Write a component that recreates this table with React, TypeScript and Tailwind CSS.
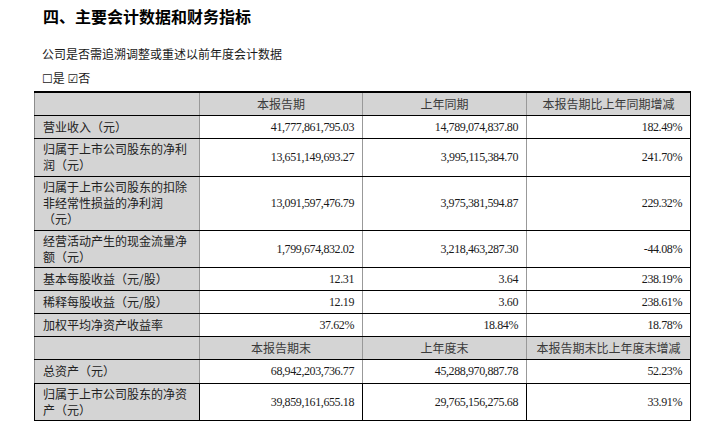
type Row = {
  label: string[];
  values: string[];
  h: string;
  header?: boolean;
  last?: boolean;
};

const rows: Row[] = [
  { label: [], values: ['本报告期', '上年同期', '本报告期比上年同期增减'], h: 'h-[23px]', header: true },
  { label: ['营业收入（元）'], values: ['41,777,861,795.03', '14,789,074,837.80', '182.49%'], h: 'h-[23px]' },
  { label: ['归属于上市公司股东的净利', '润（元）'], values: ['13,651,149,693.27', '3,995,115,384.70', '241.70%'], h: 'h-[38px]' },
  {
    label: ['归属于上市公司股东的扣除', '非经常性损益的净利润', '（元）'],
    values: ['13,091,597,476.79', '3,975,381,594.87', '229.32%'],
    h: 'h-[54px]',
  },
  { label: ['经营活动产生的现金流量净', '额（元）'], values: ['1,799,674,832.02', '3,218,463,287.30', '-44.08%'], h: 'h-[37px]' },
  { label: ['基本每股收益（元/股）'], values: ['12.31', '3.64', '238.19%'], h: 'h-[23px]' },
  { label: ['稀释每股收益（元/股）'], values: ['12.19', '3.60', '238.61%'], h: 'h-[23px]' },
  { label: ['加权平均净资产收益率'], values: ['37.62%', '18.84%', '18.78%'], h: 'h-[23px]' },
  { label: [], values: ['本报告期末', '上年度末', '本报告期末比上年度末增减'], h: 'h-[23px]', header: true },
  { label: ['总资产（元）'], values: ['68,942,203,736.77', '45,288,970,887.78', '52.23%'], h: 'h-[24px]' },
  {
    label: ['归属于上市公司股东的净资', '产（元）'],
    values: ['39,859,161,655.18', '29,765,156,275.68', '33.91%'],
    h: 'h-[37px]',
    last: true,
  },
];

export default function App() {
  return (
    <div className="w-[707px] h-[436px] bg-white overflow-hidden pt-[6px] font-['Liberation_Serif','Noto_Sans_CJK_SC',serif] text-[#1a1a1a]">
      <h2 className="pl-[43px] text-[16px] leading-[20px] font-bold font-['Noto_Sans_CJK_SC',sans-serif] text-black">
        四、主要会计数据和财务指标
      </h2>
      <p className="pl-[42px] mt-[20px] text-[12px] leading-[16px] font-['Noto_Sans_CJK_SC',serif]">
        公司是否需追溯调整或重述以前年度会计数据
      </p>
      <p className="pl-[42px] mt-[8px] text-[12px] leading-[16px] font-['Noto_Sans_CJK_SC',serif]">
        <span className="font-['DejaVu_Sans',sans-serif]">☐</span>是{' '}
        <span className="font-['DejaVu_Sans',sans-serif]">☑</span>否
      </p>

      {/* 数据表格 */}
      <table className="ml-[34px] mt-[4px] w-[656px] table-fixed border-collapse text-[12px] leading-[16px]">
        <colgroup>
          <col className="w-[165px]" />
          <col className="w-[163px]" />
          <col className="w-[164px]" />
          <col className="w-[164px]" />
        </colgroup>
        <tbody>
          {rows.map((row, i) => (
            <tr key={i} className={row.h}>
              <td
                className={`p-0 pl-[8px] align-middle bg-[#d4d4d4] border-b border-b-black border-r ${
                  row.last ? 'border-l border-l-black border-r-black' : 'border-l border-l-[#8c8c8c] border-r-[#999]'
                } ${i === 0 ? 'border-t-2 border-t-black' : ''} ${row.header ? 'border-t border-t-black' : ''}`}
              >
                <div className="font-['Noto_Sans_CJK_SC',serif] text-[#222]">
                  {row.label.map((l, j) => (
                    <div key={j}>{l}</div>
                  ))}
                </div>
              </td>
              {row.values.map((v, j) => (
                <td
                  key={j}
                  className={`p-0 align-middle border-b border-b-black ${
                    j === 2 ? 'border-r border-r-black' : row.last ? 'border-r border-r-black' : 'border-r border-r-[#999]'
                  } ${i === 0 ? 'border-t-2 border-t-black' : ''} ${row.header ? 'border-t border-t-black' : ''} ${
                    row.header
                      ? "bg-[#d4d4d4] text-center text-[#3a3a3a] font-['Noto_Sans_CJK_SC',serif]"
                      : "text-right pr-[8px] tracking-[-0.4px] font-['Liberation_Serif',serif]"
                  } ${j === 2 && !row.header ? 'pr-[7px]' : ''}`}
                >
                  {v}
                </td>
              ))}
            </tr>
          ))}
        </tbody>
      </table>
    </div>
  );
}
